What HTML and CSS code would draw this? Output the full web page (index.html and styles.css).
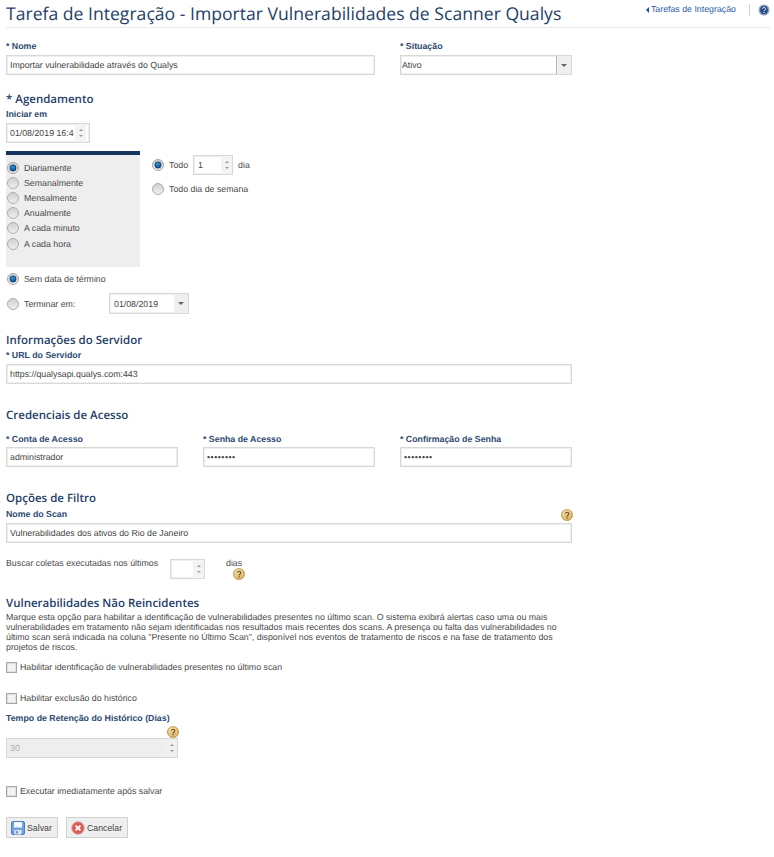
FILE: index.html
```html
<!DOCTYPE html>
<html lang="pt-BR">
  <head>
    <meta charset="UTF-8" />
    <title>Tarefa de Integração</title>
    <link rel="stylesheet" href="styles.css">
  </head>
  <body>
    <svg class="defs" width="0" height="0">
      <defs>
        <radialGradient id="gold" cx="40%" cy="35%" r="70%">
          <stop offset="0" stop-color="#f3dfa6" />
          <stop offset="1" stop-color="#c8963a" />
        </radialGradient>
        <radialGradient id="blue-dot" cx="45%" cy="35%" r="70%">
          <stop offset="0" stop-color="#2f9be0" />
          <stop offset="1" stop-color="#0a3f78" />
        </radialGradient>
        <linearGradient id="radio-bg" x1="0" y1="0" x2="0" y2="1">
          <stop offset="0" stop-color="#cfcfcf" />
          <stop offset="1" stop-color="#f0f0f0" />
        </linearGradient>
        <symbol id="hint" viewBox="0 0 12 12">
          <circle cx="6" cy="6" r="5.6" fill="url(#gold)" stroke="#b98a38" stroke-width=".6" />
          <circle cx="6" cy="6" r="4" fill="none" stroke="#f6e8c2" stroke-width=".6" />
          <path d="M4.4 4.7c.2-1.9 3.4-1.8 3.3.1 0 1.2-1.6 1.3-1.7 2.6" fill="none" stroke="#6b5220" stroke-width="1.1" />
          <rect x="5.4" y="8.2" width="1.2" height="1.2" fill="#6b5220" />
        </symbol>
        <symbol id="radio-on" viewBox="0 0 12 12">
          <circle cx="6" cy="6" r="5.5" fill="url(#radio-bg)" stroke="#a5a5a5" />
          <circle cx="6" cy="6" r="3.2" fill="url(#blue-dot)" stroke="#0d2c55" stroke-width=".5" />
        </symbol>
        <symbol id="radio-off" viewBox="0 0 12 12">
          <circle cx="6" cy="6" r="5.5" fill="url(#radio-bg)" stroke="#adadad" />
        </symbol>
      </defs>
    </svg>

    <header class="page-head">
      <h1>Tarefa de Integração - Importar Vulnerabilidades de Scanner Qualys</h1>
      <div class="head-links">
        <a class="back-link"><span class="back-arrow"></span>Tarefas de Integração</a>
        <span class="head-sep"></span>
        <svg class="help-icon" viewBox="0 0 12 12">
          <circle cx="6" cy="6" r="5.5" fill="#8fa3bd" />
          <circle cx="6" cy="6" r="3.9" fill="#254f80" />
          <path d="M4.5 4.8c.2-1.8 3.2-1.7 3.1.1 0 1.1-1.5 1.2-1.6 2.3" fill="none" stroke="#fff" stroke-width="1" />
          <rect x="5.5" y="8" width="1" height="1" fill="#fff" />
        </svg>
      </div>
    </header>

    <main class="form">
      <div class="row row-name">
        <div class="col col-wide">
          <label class="lbl">* Nome</label>
          <div class="field">Importar vulnerabilidade através do Qualys</div>
        </div>
        <div class="col col-third">
          <label class="lbl">* Situação</label>
          <div class="field field-select">
            <span class="grow">Ativo</span>
            <span class="select-btn"><i class="caret"></i></span>
          </div>
        </div>
      </div>

      <h2 class="section section-schedule">* Agendamento</h2>
      <label class="lbl">Iniciar em</label>
      <div class="field field-start">
        <span class="grow">01/08/2019 16:4</span>
        <span class="spin"><i class="up"></i><i class="down"></i></span>
      </div>

      <div class="schedule">
        <div class="freq-panel">
          <div class="radio freq"><svg><use href="#radio-on" /></svg>Diariamente</div>
          <div class="radio freq"><svg><use href="#radio-off" /></svg>Semanalmente</div>
          <div class="radio freq"><svg><use href="#radio-off" /></svg>Mensalmente</div>
          <div class="radio freq"><svg><use href="#radio-off" /></svg>Anualmente</div>
          <div class="radio freq"><svg><use href="#radio-off" /></svg>A cada minuto</div>
          <div class="radio freq"><svg><use href="#radio-off" /></svg>A cada hora</div>
        </div>
        <div class="freq-options">
          <div class="radio every">
            <svg><use href="#radio-on" /></svg>Todo
            <div class="field field-every">
              <span class="grow">1</span>
              <span class="spin"><i class="up"></i><i class="down"></i></span>
            </div>
            dia
          </div>
          <div class="radio weekday"><svg><use href="#radio-off" /></svg>Todo dia de semana</div>
        </div>
      </div>

      <div class="radio no-end"><svg><use href="#radio-on" /></svg>Sem data de término</div>
      <div class="radio end-on">
        <svg><use href="#radio-off" /></svg><span class="end-label">Terminar em:</span>
        <div class="field field-end">
          <span class="grow">01/08/2019</span>
          <span class="select-btn"><i class="caret"></i></span>
        </div>
      </div>

      <h2 class="section section-server">Informações do Servidor</h2>
      <label class="lbl">* URL do Servidor</label>
      <div class="field">https://qualysapi.qualys.com:443</div>

      <h2 class="section section-cred">Credenciais de Acesso</h2>
      <div class="row row-cred">
        <div class="col col-third">
          <label class="lbl">* Conta de Acesso</label>
          <div class="field">administrador</div>
        </div>
        <div class="col col-third">
          <label class="lbl">* Senha de Acesso</label>
          <div class="field field-pass">••••••••</div>
        </div>
        <div class="col col-third">
          <label class="lbl">* Confirmação de Senha</label>
          <div class="field field-pass">••••••••</div>
        </div>
      </div>

      <h2 class="section section-filter">Opções de Filtro</h2>
      <div class="lbl-hint">
        <label class="lbl">Nome do Scan</label>
        <svg class="hint hint-scan"><use href="#hint" /></svg>
      </div>
      <div class="field">Vulnerabilidades dos ativos do Rio de Janeiro</div>

      <div class="recent">
        <span class="recent-text">Buscar coletas executadas nos últimos</span>
        <div class="field field-days">
          <span class="grow"></span>
          <span class="spin"><i class="up"></i><i class="down"></i></span>
        </div>
        <div class="recent-unit">
          <span>dias</span>
          <svg class="hint hint-days"><use href="#hint" /></svg>
        </div>
      </div>

      <h2 class="section section-nonrec">Vulnerabilidades Não Reincidentes</h2>
      <p class="note">Marque esta opção para habilitar a identificação de vulnerabilidades presentes no último scan. O sistema exibirá alertas caso uma ou mais vulnerabilidades em tratamento não sejam identificadas nos resultados mais recentes dos scans. A presença ou falta das vulnerabilidades no último scan será indicada na coluna "Presente no Último Scan", disponível nos eventos de tratamento de riscos e na fase de tratamento dos projetos de riscos.</p>

      <div class="check check-ident"><i class="box"></i>Habilitar identificação de vulnerabilidades presentes no último scan</div>
      <div class="check check-hist"><i class="box"></i>Habilitar exclusão do histórico</div>

      <label class="lbl lbl-keep">Tempo de Retenção do Histórico (Dias)</label>
      <div class="keep">
        <svg class="hint hint-keep"><use href="#hint" /></svg>
        <div class="field field-keep">
          <span class="grow">30</span>
          <span class="spin"><i class="up"></i><i class="down"></i></span>
        </div>
      </div>

      <div class="check check-run"><i class="box"></i>Executar imediatamente após salvar</div>

      <div class="actions">
        <button class="btn" type="button">
          <svg class="btn-icon" viewBox="0 0 14 14">
            <rect x=".5" y=".5" width="13" height="13" rx="1.5" fill="#6ea2e0" stroke="#4a7dbd" />
            <rect x="3" y="1" width="8" height="5.5" fill="#f4f8fd" />
            <rect x="3.5" y="9" width="7" height="4.5" fill="#dfe6ef" />
            <rect x="5" y="10" width="2" height="2.5" fill="#6f97c8" />
          </svg>
          Salvar
        </button>
        <button class="btn" type="button">
          <svg class="btn-icon" viewBox="0 0 14 14">
            <circle cx="7" cy="7" r="6.4" fill="#df5a55" stroke="#c9c2c0" />
            <path d="M4.6 4.6l4.8 4.8M9.4 4.6l-4.8 4.8" stroke="#fff" stroke-width="1.9" />
          </svg>
          Cancelar
        </button>
      </div>
    </main>
  </body>
</html>
```

FILE: styles.css
```css
body {
  margin: 0;
  font-family: "Liberation Sans", Arial, sans-serif;
  font-size: 8.8px;
  line-height: 10px;
  color: #4a4a4a;
  background-color: #fff;
  text-rendering: geometricPrecision;
}

.defs {
  display: block;
  height: 0;
}

.page-head {
  display: flex;
  justify-content: space-between;
  margin: 0 4px 0 6px;
  height: 27px;
  border-bottom: 1px solid #e6ebee;
}

h1 {
  margin: 3px 0 0;
  font-family: "Open Sans", sans-serif;
  font-size: 17.6px;
  line-height: 22px;
  font-weight: normal;
  color: #1f4068;
  white-space: nowrap;
}

.head-links {
  display: flex;
  align-items: flex-start;
  padding-top: 4px;
}

.back-link {
  display: flex;
  align-items: center;
  color: #2a5ca8;
  line-height: 11px;
}

.back-arrow {
  width: 0;
  height: 0;
  margin-right: 2px;
  border: 3px solid transparent;
  border-left-width: 0;
  border-right-color: #1f4f8f;
}

.head-sep {
  width: 1px;
  height: 12px;
  margin: 0 8px 0 13px;
  background-color: #c9d0d6;
}

.help-icon {
  width: 12px;
  height: 12px;
}

.form {
  width: 566px;
  margin-left: 6px;
}

.row {
  display: flex;
  justify-content: space-between;
}

.col-wide {
  width: 369px;
}

.col-third {
  width: 172px;
}

.row-name {
  margin-top: 13px;
}

.lbl {
  display: block;
  height: 11px;
  margin-bottom: 3px;
  font-weight: bold;
  line-height: 11px;
  color: #2d4a70;
}

.row-cred .lbl {
  margin-bottom: 2px;
}

.field {
  display: flex;
  align-items: center;
  box-sizing: border-box;
  height: 20px;
  padding-left: 3px;
  border: 1px solid #d8d8d8;
  box-shadow: inset 0 0 0 1px #efefef;
  color: #444;
  background-color: #fff;
}

.grow {
  flex: 1;
}

.field-select {
  padding-left: 1px;
}

.select-btn {
  display: flex;
  align-items: center;
  justify-content: center;
  width: 14px;
  height: 100%;
  border-left: 1px solid #b5b5b5;
  background-color: #efefef;
}

.caret {
  width: 0;
  height: 0;
  border: 3px solid transparent;
  border-top-color: #666;
  border-bottom-width: 0;
}

.spin {
  display: flex;
  flex-direction: column;
  align-items: center;
  justify-content: center;
  gap: 4px;
  width: 11px;
  height: 100%;
  background-color: #f3f3f3;
}

.spin .up,
.spin .down {
  width: 0;
  height: 0;
  border: 2px solid transparent;
}

.spin .up {
  border-top-width: 0;
  border-bottom-color: #999;
}

.spin .down {
  border-bottom-width: 0;
  border-top-color: #999;
}

.section {
  margin: 0;
  font-family: "Open Sans", sans-serif;
  font-size: 11.5px;
  line-height: 14px;
  font-weight: 600;
  color: #1f4068;
}

.section-schedule {
  margin: 18px 0 2px;
}

.field-start {
  width: 84px;
  padding-right: 3px;
  white-space: nowrap;
}

.schedule {
  display: flex;
  margin-top: 8px;
}

.freq-panel {
  box-sizing: border-box;
  width: 134px;
  height: 116px;
  padding-top: 5px;
  border-top: 4px solid #14325c;
  background-color: #eeeeee;
}

.radio {
  display: flex;
  align-items: center;
}

.radio svg {
  width: 12px;
  height: 12px;
  margin-right: 5px;
  flex-shrink: 0;
}

.freq {
  height: 15.2px;
  padding-left: 1px;
}

.freq-options {
  margin-left: 12px;
  padding-top: 4px;
}

.every {
  height: 20px;
}

.field-every {
  width: 40px;
  margin: 0 5px;
  padding-left: 4px;
}

.weekday {
  margin-top: 8px;
  height: 12px;
}

.no-end {
  height: 12px;
  margin: 6px 0 0 1px;
}

.end-on {
  height: 21px;
  margin: 8px 0 0 1px;
}

.end-label {
  width: 85px;
  white-space: nowrap;
}

.field-end {
  width: 80px;
  height: 21px;
  padding-left: 4px;
}

.field-end .select-btn {
  border-left: none;
}

.section-server {
  margin: 20px 0 2px;
}

.section-cred {
  margin: 25px 0 11px;
}

.section-filter {
  margin: 25px 0 3px;
}

.lbl-hint {
  position: relative;
}

.field-pass {
  letter-spacing: .5px;
}

.hint {
  width: 12px;
  height: 12px;
}

.hint-scan {
  position: absolute;
  right: -1px;
  top: 0;
}

.recent {
  display: flex;
  margin-top: 16px;
}

.recent-text {
  width: 164px;
  margin-top: -1px;
  white-space: nowrap;
}

.field-days {
  width: 35px;
  padding: 0;
}

.recent-unit {
  display: flex;
  flex-direction: column;
  align-items: flex-start;
  margin-top: -1px;
  margin-left: 21px;
}

.hint-days {
  margin: 0 0 0 7px;
}

.section-nonrec {
  margin: 17px 0 1px;
}

.note {
  margin: 0;
  width: 560px;
}

.check {
  display: flex;
  align-items: center;
  height: 12px;
}

.box {
  display: block;
  box-sizing: border-box;
  width: 11px;
  height: 11px;
  margin-right: 3px;
  border: 1px solid #a5a5a5;
  box-shadow: inset 0 0 0 1px #e0e0e0;
  background-color: #f2f2f2;
}

.check-ident {
  margin-top: 9px;
}

.check-hist {
  margin-top: 19px;
}

.lbl-keep {
  margin: 9px 0 0;
}

.keep {
  position: relative;
  width: 172px;
  margin-top: 14px;
}

.hint-keep {
  position: absolute;
  right: -1px;
  top: -12px;
}

.field-keep {
  color: #aaa;
  background-color: #eeeeee;
  box-shadow: none;
}

.field-keep .spin {
  background-color: #f0f0f0;
}

.check-run {
  margin-top: 27px;
}

.actions {
  display: flex;
  gap: 8px;
  margin-top: 20px;
}

.btn {
  display: flex;
  align-items: center;
  gap: 2px;
  height: 21px;
  padding: 0 5px 0 4px;
  border: 1px solid #d0d0d0;
  font-family: "Liberation Sans", Arial, sans-serif;
  font-size: 8.8px;
  color: #444;
  background-color: #efefef;
}

.btn-icon {
  width: 14px;
  height: 14px;
}
```
